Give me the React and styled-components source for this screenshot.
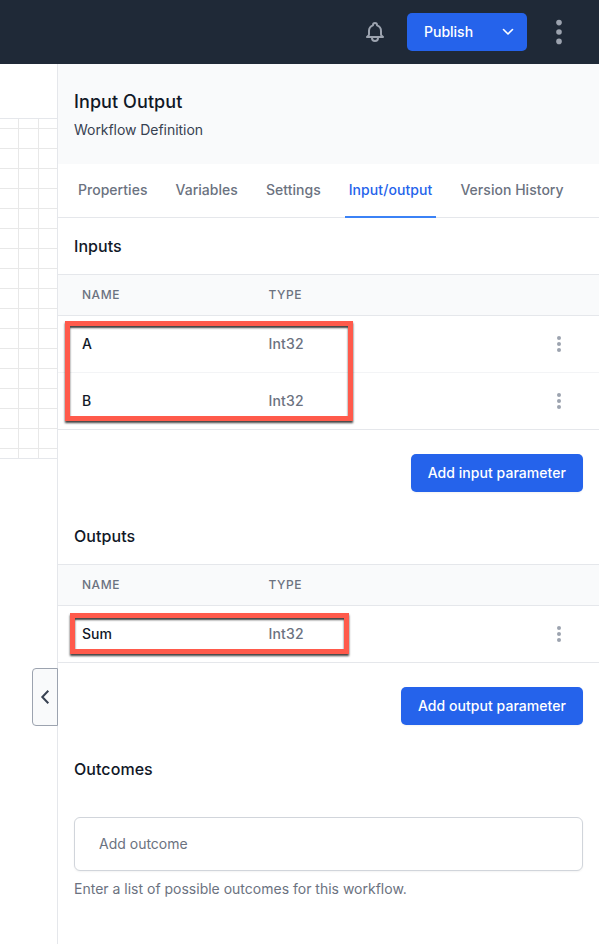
import React from 'react';
import styled, { createGlobalStyle } from 'styled-components';

const GlobalStyle = createGlobalStyle`
  *, *::before, *::after { box-sizing: border-box; }
  body {
    margin: 0;
    background: #fff;
    font-family: Inter, "Liberation Sans", sans-serif;
    font-size: 14px;
    line-height: 20px;
    color: #111827;
    overflow: hidden;
  }
  h1, h2, p { margin: 0; }
  button { font: inherit; border: 0; padding: 0; background: none; color: inherit; cursor: pointer; }
`;

const Page = styled.div`
  display: flex;
  flex-direction: column;
  height: 944px;
`;

const TopBar = styled.header`
  display: flex;
  flex: none;
  align-items: center;
  justify-content: flex-end;
  height: 64px;
  padding-right: 35px;
  background: #1f2937;
  color: #9ca3af;
`;

const IconButton = styled.button`
  display: flex;
  align-items: center;
  justify-content: center;
`;

const SplitButton = styled.div`
  display: flex;
  align-items: center;
  width: 120px;
  height: 38px;
  margin: 0 27px 0 20px;
  border-radius: 5px;
  background: #2563eb;
  color: #fff;
  font-weight: 500;
`;

const PublishButton = styled.button`
  flex: 1;
  height: 38px;
  padding-left: 17px;
  text-align: left;
`;

const PublishMenu = styled(IconButton)`
  width: 38px;
  height: 38px;
`;

const Workspace = styled.main`
  display: flex;
  flex: 1;
  min-height: 0;
`;

const Canvas = styled.section`
  position: relative;
  width: 57px;
  padding-top: 54px;
`;

const Grid = styled.div`
  height: 341px;
  border-top: 1px solid #e5e7eb;
  border-bottom: 1px solid #e5e7eb;
  background-image:
    linear-gradient(to right, #e8e8e8 1px, transparent 1px),
    linear-gradient(to bottom, #e8e8e8 1px, transparent 1px);
  background-size: 20px 20px;
  background-position: 18px 9px;
`;

const PanelToggle = styled(IconButton)`
  position: absolute;
  top: 604px;
  right: -1px;
  width: 26px;
  height: 58px;
  border: 1px solid #9ca3af;
  border-radius: 4px 0 0 4px;
  background: #f9fafb;
  color: #374151;
`;

const Panel = styled.aside`
  flex: 1;
  min-width: 0;
  border-left: 1px solid #e5e7eb;
`;

const PanelHeader = styled.div`
  height: 100px;
  padding: 24px 16px;
  background: #f9fafb;
`;

const PanelTitle = styled.h1`
  font-size: 18px;
  line-height: 28px;
  font-weight: 500;
  letter-spacing: 0.08px;
`;

const PanelSubtitle = styled.p`
  margin-top: 4px;
  color: #374151;
  letter-spacing: -0.05px;
`;

const Tabs = styled.nav`
  display: flex;
  gap: 20px;
  height: 54px;
  padding-left: 16px;
  border-bottom: 1px solid #e5e7eb;
`;

const Tab = styled.button`
  height: 54px;
  padding: 0 4px;
  border-bottom: 2px solid ${(p) => (p.$active ? '#3b82f6' : 'transparent')};
  color: ${(p) => (p.$active ? '#2563eb' : '#6b7280')};
  font-weight: 500;
  letter-spacing: ${(p) => (p.$active ? '0.08px' : '0.03px')};
  white-space: nowrap;
`;

const SectionTitle = styled.h2`
  padding: 16px;
  font-size: 16px;
  line-height: 24px;
  font-weight: 500;
  letter-spacing: 0.06px;
`;

const Table = styled.div`
  position: relative;
  border-top: 1px solid #e5e7eb;
`;

const Row = styled.div`
  display: grid;
  grid-template-columns: 186.5px 1fr 32px;
  align-items: center;
  height: 57px;
  padding: 0 24px;
  border-bottom: 1px solid #f3f4f6;
  font-weight: 500;
  &:last-of-type { border-bottom-color: #e5e7eb; }
`;

const HeadRow = styled(Row)`
  height: 41px;
  border-bottom-color: #e5e7eb;
  background: #f9fafb;
  color: #6b7280;
  font-size: 12px;
  letter-spacing: 0.045em;
`;

const TypeCell = styled.span`
  color: #6b7280;
  letter-spacing: 0.15px;
`;

const RowMenu = styled(IconButton)`
  color: #9ca3af;
`;

const Highlight = styled.span`
  position: absolute;
  left: ${(p) => p.$left}px;
  top: ${(p) => p.$top}px;
  width: ${(p) => p.$width}px;
  height: ${(p) => p.$height}px;
  border: 5px solid #ff5a4b;
  box-shadow:
    0 2px 2px rgba(0, 0, 0, 0.75),
    inset 0 2px 2px rgba(0, 0, 0, 0.75);
  pointer-events: none;
`;

const Actions = styled.div`
  display: flex;
  justify-content: flex-end;
  padding: 24px 16px 16px;
`;

const PrimaryButton = styled.button`
  height: 38px;
  padding: 0 17px;
  border-radius: 5px;
  background: #2563eb;
  color: #fff;
  font-weight: 500;
  letter-spacing: 0.05px;
  white-space: nowrap;
  box-shadow: 0 1px 2px rgba(0, 0, 0, 0.05);
`;

const Outcomes = styled.div`
  padding: 20px 16px 0;
`;

const OutcomeInput = styled.input`
  display: block;
  width: 100%;
  height: 54px;
  padding: 0 24px 2px;
  border: 1px solid #d1d5db;
  border-radius: 6px;
  background: #fff;
  font: inherit;
  box-shadow: 0 1px 2px rgba(0, 0, 0, 0.05);
  &::placeholder { color: #6b7280; opacity: 1; }
`;

const Hint = styled.p`
  margin-top: 8px;
  color: #6b7280;
`;

function BellIcon() {
  return (
    <svg width="24" height="24" viewBox="0 0 24 24" fill="none" stroke="currentColor" strokeWidth="2" strokeLinecap="round" strokeLinejoin="round">
      <path d="M15 17h5l-1.405-1.405A2.032 2.032 0 0118 14.158V11a6.002 6.002 0 00-4-5.659V5a2 2 0 10-4 0v.341C7.67 6.165 6 8.388 6 11v3.159c0 .538-.214 1.055-.595 1.436L4 17h5m6 0v1a3 3 0 11-6 0v-1m6 0H9" />
    </svg>
  );
}

function ChevronDown() {
  return (
    <svg width="20" height="20" viewBox="0 0 20 20" fill="none" stroke="currentColor" strokeWidth="1.6" strokeLinecap="round" strokeLinejoin="round">
      <path d="M5.5 7.5L10 12l4.5-4.5" />
    </svg>
  );
}

function ChevronLeft() {
  return (
    <svg width="24" height="24" viewBox="0 0 24 24" fill="none" stroke="currentColor" strokeWidth="2">
      <path d="M15.3 5.7L9.3 12l6 6.3" />
    </svg>
  );
}

function Dots({ radius, gap }) {
  return (
    <svg width="10" height="32" viewBox="0 0 10 32" fill="currentColor">
      <circle cx="5" cy={16 - gap} r={radius} />
      <circle cx="5" cy="16" r={radius} />
      <circle cx="5" cy={16 + gap} r={radius} />
    </svg>
  );
}

function ParameterTable({ rows, highlight }) {
  return (
    <Table>
      <HeadRow><span>NAME</span><span>TYPE</span></HeadRow>
      {rows.map(([name, type]) => (
        <Row key={name}>
          <span>{name}</span>
          <TypeCell>{type}</TypeCell>
          <RowMenu aria-label="Parameter menu"><Dots radius={2} gap={6} /></RowMenu>
        </Row>
      ))}
      <Highlight {...highlight} />
    </Table>
  );
}

const tabs = ['Properties', 'Variables', 'Settings', 'Input/output', 'Version History'];

export default function App() {
  return (
    <Page>
      <GlobalStyle />
      <TopBar>
        <IconButton aria-label="Notifications"><BellIcon /></IconButton>
        <SplitButton>
          <PublishButton>Publish</PublishButton>
          <PublishMenu aria-label="Publish options"><ChevronDown /></PublishMenu>
        </SplitButton>
        <IconButton aria-label="Menu"><Dots radius={2.8} gap={9.4} /></IconButton>
      </TopBar>
      <Workspace>
        <Canvas>
          <Grid />
          <PanelToggle aria-label="Expand panel"><ChevronLeft /></PanelToggle>
        </Canvas>
        <Panel>
          <PanelHeader>
            <PanelTitle>Input Output</PanelTitle>
            <PanelSubtitle>Workflow Definition</PanelSubtitle>
          </PanelHeader>
          <Tabs>
            {tabs.map((label) => (
              <Tab key={label} $active={label === 'Input/output'}>{label}</Tab>
            ))}
          </Tabs>
          <SectionTitle>Inputs</SectionTitle>
          <ParameterTable
            rows={[['A', 'Int32'], ['B', 'Int32']]}
            highlight={{ $left: 7, $top: 46, $width: 288, $height: 100 }}
          />
          <Actions><PrimaryButton>Add input parameter</PrimaryButton></Actions>
          <SectionTitle>Outputs</SectionTitle>
          <ParameterTable
            rows={[['Sum', 'Int32']]}
            highlight={{ $left: 12, $top: 48, $width: 279, $height: 41 }}
          />
          <Actions><PrimaryButton>Add output parameter</PrimaryButton></Actions>
          <SectionTitle>Outcomes</SectionTitle>
          <Outcomes>
            <OutcomeInput placeholder="Add outcome" />
            <Hint>Enter a list of possible outcomes for this workflow.</Hint>
          </Outcomes>
        </Panel>
      </Workspace>
    </Page>
  );
}
